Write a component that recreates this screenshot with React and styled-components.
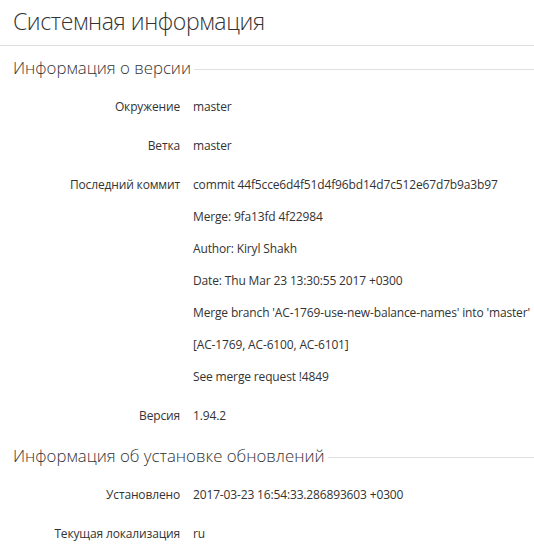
import styled, { createGlobalStyle } from "styled-components";

const GlobalStyle = createGlobalStyle`
  body {
    margin: 0;
    background: #fff;
    font-family: "Open Sans", "Liberation Sans", sans-serif;
    color: #333;
  }
`;

const Page = styled.div`
  width: 534px;
`;

const Title = styled.h1`
  margin: 0;
  padding: 0 13px 2px;
  height: 43px;
  line-height: 43px;
  font-size: 23px;
  font-weight: 300;
  letter-spacing: -0.4px;
  color: #333;
  border-bottom: 1px solid #ddd;
`;

const Section = styled.section`
  padding-left: 13px;
  margin-top: 10px;

  & + & {
    margin-top: 18px;
  }
`;

const Legend = styled.div`
  display: flex;
  align-items: center;
  height: 24px;
  margin-bottom: 17px;
  font-size: 16.8px;
  line-height: 24px;
  font-weight: 300;
  color: #333;
  white-space: nowrap;

  &::after {
    content: "";
    flex: 1;
    height: 1px;
    margin-left: 3px;
    margin-top: 2px;
    background: #e0e0e0;
  }
`;

const Rows = styled.dl`
  margin: 0;
  display: flex;
  flex-direction: column;
  gap: 19px;
`;

const Row = styled.div`
  display: grid;
  grid-template-columns: 167px 1fr;
  column-gap: 13px;
  font-size: 12px;
  line-height: 20px;
  letter-spacing: -0.15px;
`;

const Label = styled.dt`
  text-align: right;
  white-space: nowrap;
`;

const Value = styled.dd`
  margin: 0;
  display: flex;
  flex-direction: column;
  gap: 12px;
  white-space: nowrap;
`;

const commit = [
  "commit 44f5cce6d4f51d4f96bd14d7c512e67d7b9a3b97",
  "Merge: 9fa13fd 4f22984",
  "Author: Kiryl Shakh",
  "Date: Thu Mar 23 13:30:55 2017 +0300",
  "Merge branch 'AC-1769-use-new-balance-names' into 'master'",
  "[AC-1769, AC-6100, AC-6101]",
  "See merge request !4849",
];

const sections = [
  {
    title: "Информация о версии",
    rows: [
      ["Окружение", ["master"]],
      ["Ветка", ["master"]],
      ["Последний коммит", commit],
      ["Версия", ["1.94.2"]],
    ],
  },
  {
    title: "Информация об установке обновлений",
    rows: [
      ["Установлено", ["2017-03-23 16:54:33.286893603 +0300"]],
      ["Текущая локализация", ["ru"]],
    ],
  },
];

const App = () => {
  return (
    <Page>
      <GlobalStyle />
      <Title>Системная информация</Title>
      {sections.map((s) => (
        <Section key={s.title}>
          <Legend>{s.title}</Legend>
          <Rows>
            {s.rows.map(([label, lines]) => (
              <Row key={label}>
                <Label>{label}</Label>
                <Value>
                  {lines.map((l) => (
                    <span key={l}>{l}</span>
                  ))}
                </Value>
              </Row>
            ))}
          </Rows>
        </Section>
      ))}
    </Page>
  );
};

export default App;
